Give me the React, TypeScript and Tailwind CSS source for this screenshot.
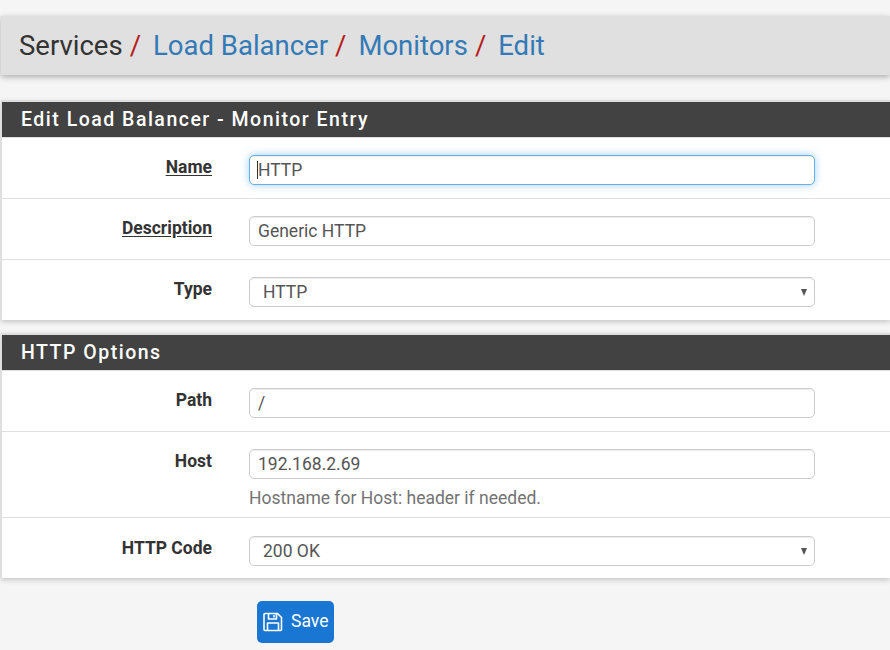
import type { ReactNode } from 'react';

const inputBase = 'block w-full h-[30px] rounded-[5px] border bg-white px-2 text-[17.5px] text-[#555] outline-none';
const inputClass = `${inputBase} border-[#ccc] shadow-[inset_0_1px_1px_rgba(0,0,0,0.075)]`;
const inputFocus = `${inputBase} border-[#66afe9] shadow-[inset_0_1px_1px_rgba(0,0,0,0.075),0_0_8px_rgba(102,175,233,0.6)]`;

function Row({ label, underline, tall, last, children }: { label: string; underline?: boolean; tall?: boolean; last?: boolean; children: ReactNode }) {
    return (
        <div className={`flex ${tall ? 'h-[86px]' : last ? 'h-[60px]' : 'h-[61px]'} ${last ? '' : 'border-b border-[#e0e0e0]'}`}>
            <div className="w-[210px] shrink-0 pt-[17px] text-right">
                <span className={`text-[17.5px] leading-[25px] font-bold text-[#333] ${underline ? 'underline underline-offset-2' : ''}`}>{label}</span>
            </div>
            <div className="ml-[37px] w-[566px] pt-[17px]">{children}</div>
        </div>
    );
}

function Select({ value }: { value: string }) {
    return (
        <div className="relative">
            <select defaultValue={value} className={`${inputClass} appearance-none pl-[13px]`}>
                <option>{value}</option>
            </select>
            <span className="absolute right-[8px] top-[12px] h-0 w-0 border-x-[3.5px] border-t-[7px] border-x-transparent border-t-[#555]" />
        </div>
    );
}

function Panel({ title, children }: { title: string; children: ReactNode }) {
    return (
        <section className="ml-px border-t-2 border-l border-[#ddd] bg-white shadow-[0_2px_5px_rgba(0,0,0,0.2)]">
            <h2 className="flex h-[36px] items-center border-b border-[#e0e0e0] bg-[#424242] pl-[19px] text-[19.5px] font-medium tracking-[1.5px] text-white">
                {title}
            </h2>
            {children}
        </section>
    );
}

export default function App() {
    return (
        <div className="h-[650px] w-[890px] overflow-hidden bg-[#f5f5f5] pt-[16px] font-['Roboto',sans-serif]">
            <div className="ml-px flex h-[59px] items-center bg-[#e0e0e0] pl-[18px] text-[27.5px] shadow-[0_2px_6px_rgba(0,0,0,0.3)]">
                <span className="text-[#333]">Services</span>
                <span className="ml-[7px] text-[#b71c1c]">/</span>
                <a className="ml-[12px] text-[#337ab7]">Load Balancer</a>
                <span className="ml-[7px] text-[#b71c1c]">/</span>
                <a className="ml-[12px] text-[#337ab7]">Monitors</a>
                <span className="ml-[7px] text-[#b71c1c]">/</span>
                <a className="ml-[12px] text-[#337ab7]">Edit</a>
            </div>

            <div className="mt-[25px]">
                <Panel title="Edit Load Balancer - Monitor Entry">
                    <Row label="Name" underline>
                        <div className="relative">
                            <input defaultValue="HTTP" className={inputFocus} />
                            <span className="absolute left-[8px] top-[6px] h-[18px] w-px bg-[#333]" />
                        </div>
                    </Row>
                    <Row label="Description" underline>
                        <input defaultValue="Generic HTTP" className={inputClass} />
                    </Row>
                    <Row label="Type" last>
                        <Select value="HTTP" />
                    </Row>
                </Panel>
            </div>

            <div className="mt-[13px]">
                <Panel title="HTTP Options">
                    <Row label="Path">
                        <input defaultValue="/" className={inputClass} />
                    </Row>
                    <Row label="Host" tall>
                        <input defaultValue="192.168.2.69" className={inputClass} />
                        <p className="mt-[7px] text-[17.5px] leading-[25px] text-[#737373]">Hostname for Host: header if needed.</p>
                    </Row>
                    <div className="h-[60px] pt-px">
                        <Row label="HTTP Code" last>
                            <Select value="200 OK" />
                        </Row>
                    </div>
                </Panel>
            </div>

            <button className="ml-[257px] mt-[23px] flex h-[42px] w-[77px] items-center gap-[8px] rounded-[5px] bg-[#1976d2] pb-px pl-[6px] text-[17.5px] text-white">
                <svg width="20" height="20" viewBox="0 0 20 20" fill="none" stroke="currentColor" strokeWidth="1.6" strokeLinejoin="round">
                    <path d="M1 2.500a1 1 0 0 1 1-1h12.500l4 4v12a1 1 0 0 1-1 1h-15.500a1 1 0 0 1-1-1z" />
                    <path d="M5.500 1.500v5.500h8v-5.500" />
                    <path d="M11 3v2.500" />
                    <path d="M4.500 18.500v-7.500h11v7.500" />
                </svg>
                Save
            </button>
        </div>
    );
}
